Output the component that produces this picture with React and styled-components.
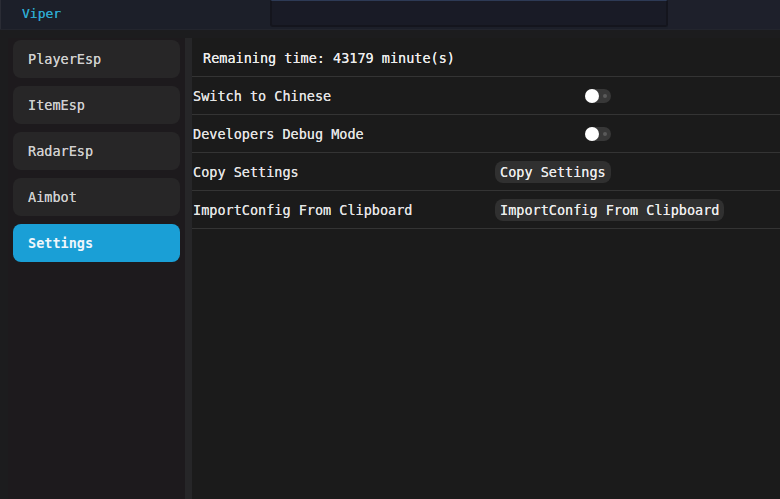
import React, { useState } from 'react';
import styled, { createGlobalStyle } from 'styled-components';

const GlobalStyle = createGlobalStyle`
  html, body {
    margin: 0;
    padding: 0;
    background: #1c1c1e;
  }
  body {
    font-family: "DejaVu Sans Mono", "Liberation Mono", monospace;
    color: #e2e2e2;
  }
`;

const tabs = ['PlayerEsp', 'ItemEsp', 'RadarEsp', 'Aimbot', 'Settings'];

export default function App() {
  const [active, setActive] = useState('Settings');
  const [chinese, setChinese] = useState(false);
  const [debug, setDebug] = useState(false);

  return (
    <>
      <GlobalStyle />
      <Window>
        <TitleBar>
          <Title>Viper</Title>
          <TitleSlot />
          <TitleRest />
        </TitleBar>
        <Body>
          <Sidebar>
            {tabs.map((t) => (
              <TabButton key={t} $active={t === active} onClick={() => setActive(t)}>
                {t}
              </TabButton>
            ))}
          </Sidebar>
          <Divider />
          <Content>
            <InfoRow>Remaining time: 43179 minute(s)</InfoRow>
            <Row>
              <Label>Switch to Chinese</Label>
              <Toggle $on={chinese} onClick={() => setChinese(!chinese)}>
                <Knob $on={chinese} />
                <Dot />
              </Toggle>
            </Row>
            <Row>
              <Label>Developers Debug Mode</Label>
              <Toggle $on={debug} onClick={() => setDebug(!debug)}>
                <Knob $on={debug} />
                <Dot />
              </Toggle>
            </Row>
            <Row>
              <Label>Copy Settings</Label>
              <ActionButton>Copy Settings</ActionButton>
            </Row>
            <Row>
              <Label>ImportConfig From Clipboard</Label>
              <ActionButton>ImportConfig From Clipboard</ActionButton>
            </Row>
          </Content>
        </Body>
      </Window>
    </>
  );
}

const Window = styled.div`
  width: 780px;
  height: 499px;
  display: flex;
  flex-direction: column;
  overflow: hidden;
  background: #1f1f21;
`;

const TitleBar = styled.div`
  height: 30px;
  display: flex;
  background: #1c1f29;
  border-bottom: 1px solid #23252d;
  box-sizing: border-box;
`;

const Title = styled.div`
  width: 270px;
  padding-left: 21px;
  box-sizing: border-box;
  font-size: 13px;
  line-height: 28px;
  color: #2ea8cf;
  border-left: 1px solid #2a2c35;
  text-shadow: 0 0 0.4px #2ea8cf;
`;

const TitleSlot = styled.div`
  width: 398px;
  height: 27px;
  background: #191b26;
  border-left: 2px solid #14151d;
  border-right: 2px solid #14151d;
  border-bottom: 2px solid #14151d;
  border-top: 1px solid #2d3a55;
  box-sizing: border-box;
  border-radius: 0 0 3px 3px;
`;

const TitleRest = styled.div`
  flex: 1;
  background: #1e202b;
`;

const Body = styled.div`
  flex: 1;
  display: flex;
  padding: 8px 0 0 8px;
  background: #1c1c1e;
`;

const Sidebar = styled.div`
  width: 177px;
  display: flex;
  flex-direction: column;
  gap: 8px;
  padding: 2px 5px;
  box-sizing: border-box;
  background: #1d1a1d;
`;

const TabButton = styled.div`
  height: 38px;
  display: flex;
  align-items: center;
  padding-left: 15px;
  border-radius: 8px;
  font-size: 13.5px;
  font-weight: ${(p) => (p.$active ? 'bold' : 'normal')};
  background: ${(p) => (p.$active ? '#1a9fd6' : '#272627')};
  color: ${(p) => (p.$active ? '#eef6fb' : '#cfcfcf')};
  text-shadow: ${(p) => (p.$active ? 'none' : '0 0 0.4px #cfcfcf')};
  cursor: pointer;
`;

const Divider = styled.div`
  width: 7px;
  background: #262628;
`;

const Content = styled.div`
  flex: 1;
  display: flex;
  flex-direction: column;
  background: #1b1b1b;
  padding-top: 1px;
`;

const InfoRow = styled.div`
  height: 37px;
  display: flex;
  align-items: center;
  padding-left: 11px;
  font-size: 13.5px;
  color: #ededed;
  text-shadow: 0 0 0.4px #ededed;
  border-bottom: 1px solid #343434;
`;

const Row = styled.div`
  height: 37px;
  display: flex;
  align-items: center;
  padding-left: 1px;
  border-bottom: 1px solid #343434;
`;

const Label = styled.div`
  width: 302px;
  font-size: 13.5px;
  color: #e4e4e4;
  text-shadow: 0 0 0.4px #e4e4e4;
`;

const Toggle = styled.div`
  position: relative;
  margin-left: 90px;
  width: 26px;
  height: 14px;
  border-radius: 7px;
  background: ${(p) => (p.$on ? '#1a9fd6' : '#383838')};
  cursor: pointer;
`;

const Knob = styled.div`
  position: absolute;
  top: 0;
  left: ${(p) => (p.$on ? '12px' : '0')};
  width: 14px;
  height: 14px;
  border-radius: 50%;
  background: #ffffff;
`;

const Dot = styled.div`
  position: absolute;
  top: 5px;
  right: 4px;
  width: 4px;
  height: 4px;
  border-radius: 50%;
  background: #5a5a5a;
`;

const ActionButton = styled.div`
  height: 22px;
  display: flex;
  align-items: center;
  padding: 0 5px;
  border-radius: 8px;
  background: #303030;
  font-size: 13.5px;
  color: #ececec;
  text-shadow: 0 0 0.4px #ececec;
  cursor: pointer;
`;
